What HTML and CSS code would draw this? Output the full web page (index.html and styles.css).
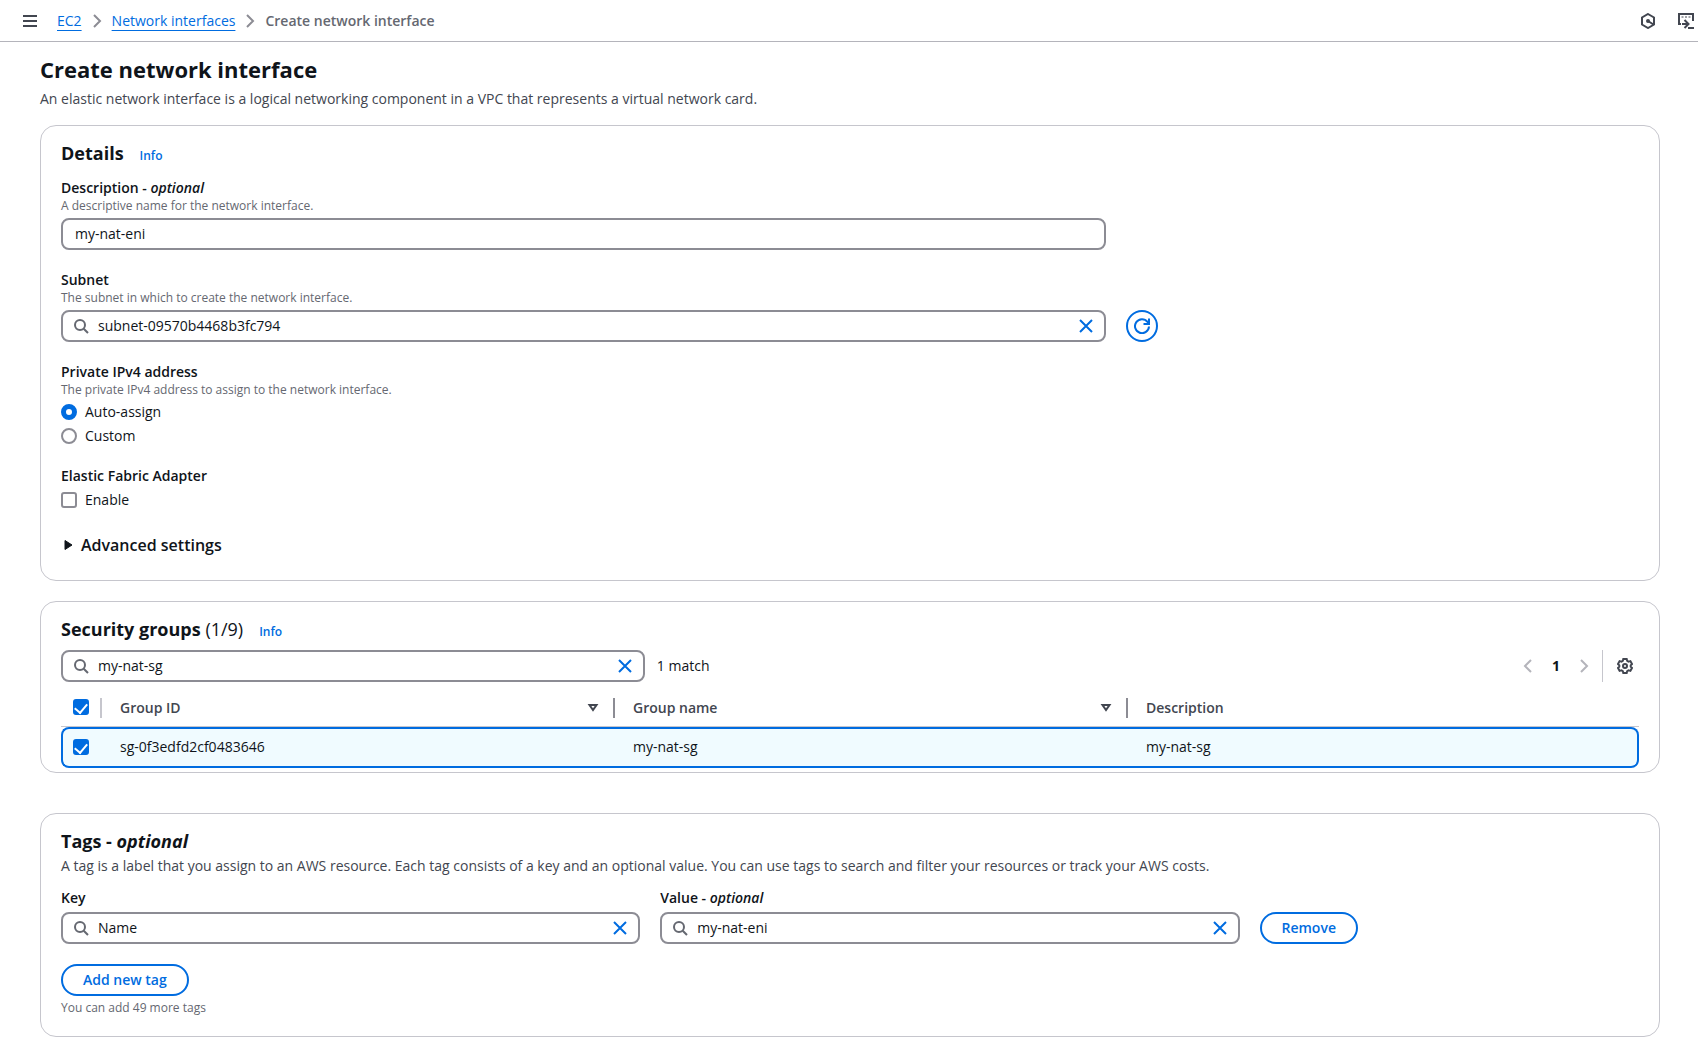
FILE: index.html
```html
<!DOCTYPE html>
<html lang="en">
<head>
<meta charset="utf-8">
<meta name="viewport" content="width=device-width, initial-scale=1">
<title>Create network interface | EC2</title>
<link rel="stylesheet" href="styles.css">
</head>
<body>
<svg class="sprite" aria-hidden="true">
  <symbol id="search" viewBox="0 0 16 16"><circle cx="7" cy="7" r="5"/><path d="m10.700 10.700 4.300 4.300"/></symbol>
  <symbol id="close" viewBox="0 0 16 16"><path d="m2 2 12 12M14 2 2 14"/></symbol>
  <symbol id="next" viewBox="0 0 16 16"><path d="m5 2 6 6-6 6"/></symbol>
  <symbol id="previous" viewBox="0 0 16 16"><path d="M11 2 5 8l6 6"/></symbol>
  <symbol id="sort" viewBox="0 0 16 16"><path d="M4.500 5h7L8 10z"/></symbol>
</svg>

<header class="topbar">
  <button class="icon-button" type="button" aria-label="Open navigation">
    <svg class="icon" viewBox="0 0 16 16"><path d="M1 3h14M1 8h14M1 13h14"/></svg>
  </button>
  <nav class="breadcrumbs" aria-label="Breadcrumbs">
    <a href="#">EC2</a>
    <svg class="icon"><use href="#next"/></svg>
    <a href="#">Network interfaces</a>
    <svg class="icon"><use href="#next"/></svg>
    <span class="current" aria-current="page">Create network interface</span>
  </nav>
  <div class="tools">
    <button class="icon-button" type="button" aria-label="Assistant">
      <svg class="icon" viewBox="0 0 16 16"><path d="m8 1 6 3.500v7L8 15l-6-3.500v-7zM8 8l5.500 3.500"/><circle class="solid" cx="8" cy="8" r="1"/></svg>
    </button>
    <button class="icon-button" type="button" aria-label="CloudShell">
      <svg class="icon" viewBox="0 0 16 16"><path d="M3 11H1V1h14v7M10 15h6M4 11h6M6.500 7l4 4-4 4"/><path class="fine" d="M3.500 4h2M7 4h2M10.500 4h2"/></svg>
    </button>
  </div>
</header>

<main class="page">
  <div class="page-header">
    <h1>Create network interface</h1>
    <p>An elastic network interface is a logical networking component in a VPC that represents a virtual network card.</p>
  </div>

  <section class="card details">
    <div class="card-title"><h2>Details</h2><a class="info" href="#">Info</a></div>
    <div class="fields">
      <div class="field">
        <label for="description">Description - <em>optional</em></label>
        <p class="hint">A descriptive name for the network interface.</p>
        <div class="grid-thirds"><div class="textbox wide"><input id="description" type="text" value="my-nat-eni"></div></div>
      </div>
      <div class="field">
        <label for="subnet">Subnet</label>
        <p class="hint">The subnet in which to create the network interface.</p>
        <div class="grid-thirds">
          <div class="textbox wide">
            <svg class="icon"><use href="#search"/></svg>
            <input id="subnet" type="text" value="subnet-09570b4468b3fc794">
            <button class="icon-button clear" type="button" aria-label="Clear subnet"><svg class="icon"><use href="#close"/></svg></button>
          </div>
          <button class="refresh" type="button" aria-label="Refresh subnets">
            <svg class="icon" viewBox="0 0 16 16"><path d="M15 8.500A7 7 0 1 1 13.500 3.800L15 5.500M15 .5V6h-5.500"/></svg>
          </button>
        </div>
      </div>
      <fieldset class="field">
        <legend>Private IPv4 address</legend>
        <p class="hint">The private IPv4 address to assign to the network interface.</p>
        <label class="choice"><input type="radio" name="ipv4" checked>Auto-assign</label>
        <label class="choice"><input type="radio" name="ipv4">Custom</label>
      </fieldset>
      <fieldset class="field">
        <legend>Elastic Fabric Adapter</legend>
        <label class="choice"><input type="checkbox">Enable</label>
      </fieldset>
    </div>
    <button class="expander" type="button" aria-expanded="false">
      <svg class="icon" viewBox="0 0 16 16"><path class="solid" d="M4 3.500v9L11 8z"/></svg>Advanced settings
    </button>
  </section>

  <section class="card groups">
    <div class="card-title"><h2>Security groups <span class="count">(1/9)</span></h2><a class="info" href="#">Info</a></div>
    <div class="toolbar">
      <div class="textbox filter">
        <svg class="icon"><use href="#search"/></svg>
        <input type="text" value="my-nat-sg" aria-label="Filter security groups">
        <button class="icon-button clear" type="button" aria-label="Clear filter"><svg class="icon"><use href="#close"/></svg></button>
      </div>
      <span>1 match</span>
      <div class="actions">
        <div class="pager">
          <button class="icon-button" type="button" aria-label="Previous page" disabled><svg class="icon"><use href="#previous"/></svg></button>
          <button class="page-number" type="button" aria-current="page">1</button>
          <button class="icon-button" type="button" aria-label="Next page" disabled><svg class="icon"><use href="#next"/></svg></button>
        </div>
        <div class="preferences">
          <button class="icon-button" type="button" aria-label="Preferences">
            <svg class="icon" viewBox="0 0 16 16"><path d="M6.300 1h3.400l.5 1.900 1.300.7 1.900-.5 1.600 2.900-1.300 1.300v1.400l1.300 1.300-1.600 2.900-1.900-.5-1.300.7-.5 1.900H6.300l-.5-1.900-1.300-.7-1.900.5L1 10l1.300-1.300V7.300L1 6l1.600-2.900 1.900.5 1.300-.7z"/><circle cx="8" cy="8" r="2"/></svg>
          </button>
        </div>
      </div>
    </div>
    <table>
      <colgroup><col class="select-column"><col><col><col></colgroup>
      <thead>
        <tr>
          <th scope="col"><input type="checkbox" aria-label="Select all groups" checked></th>
          <th scope="col"><div class="heading">Group ID<button class="icon-button" type="button" aria-label="Sort by group ID"><svg class="icon"><use href="#sort"/></svg></button></div></th>
          <th scope="col"><div class="heading">Group name<button class="icon-button" type="button" aria-label="Sort by group name"><svg class="icon"><use href="#sort"/></svg></button></div></th>
          <th scope="col"><div class="heading">Description</div></th>
        </tr>
      </thead>
      <tbody>
        <tr>
          <td><input type="checkbox" aria-label="Select my-nat-sg" checked></td>
          <td>sg-0f3edfd2cf0483646</td>
          <td>my-nat-sg</td>
          <td>my-nat-sg</td>
        </tr>
      </tbody>
    </table>
  </section>

  <section class="card tags">
    <div class="card-title"><h2>Tags - <em>optional</em></h2></div>
    <p class="summary">A tag is a label that you assign to an AWS resource. Each tag consists of a key and an optional value. You can use tags to search and filter your resources or track your AWS costs.</p>
    <div class="tag-row">
      <div class="field">
        <label for="key">Key</label>
        <div class="textbox">
          <svg class="icon"><use href="#search"/></svg>
          <input id="key" type="text" value="Name">
          <button class="icon-button clear" type="button" aria-label="Clear key"><svg class="icon"><use href="#close"/></svg></button>
        </div>
      </div>
      <div class="field">
        <label for="value">Value - <em>optional</em></label>
        <div class="textbox">
          <svg class="icon"><use href="#search"/></svg>
          <input id="value" type="text" value="my-nat-eni">
          <button class="icon-button clear" type="button" aria-label="Clear value"><svg class="icon"><use href="#close"/></svg></button>
        </div>
      </div>
      <button class="button" type="button">Remove</button>
    </div>
    <button class="button" type="button">Add new tag</button>
    <p class="hint">You can add 49 more tags</p>
  </section>
</main>
</body>
</html>
```
FILE: styles.css
```css
:root {
  --blue: #006ce0;
  --text: #0f141a;
  --muted: #424650;
  --hint: #656871;
  --control: #8c8c94;
  --line: #c6c6cd;
  --strong: 600;
}

* { box-sizing: border-box; }

body {
  margin: 0;
  background: #fff;
  color: var(--text);
  font: 14px/20px "Open Sans", "Noto Sans", sans-serif;
}

h1, h2, p { margin: 0; }
h1 { font-size: 22px; line-height: 30px; font-weight: 700; }
h2 { font-size: 18px; line-height: 24px; font-weight: 700; }
a { color: var(--blue); }

button, input { font: inherit; color: inherit; }
button { padding: 0; border: 0; background: none; cursor: pointer; }

.sprite { display: none; }

.icon {
  display: block;
  flex: none;
  width: 16px;
  height: 16px;
  fill: none;
  stroke: currentColor;
  stroke-width: 2;
}
.icon .solid { fill: currentColor; }
.icon .fine { stroke-width: 1; }
.icon-button { flex: none; color: var(--muted); }
.icon-button:disabled { color: #b4b4bb; }

.topbar {
  display: flex;
  align-items: center;
  gap: 19px;
  min-height: 42px;
  padding: 0 4px 0 22px;
  border-bottom: 1px solid #b4b4bb;
}
.breadcrumbs { display: flex; align-items: center; gap: 7px; color: var(--control); }
.breadcrumbs a { text-underline-offset: 4px; }
.current { color: var(--hint); font-weight: var(--strong); }
.tools { display: flex; gap: 22px; margin-left: auto; }

.page { padding: 12px 38px 15px 40px; }
.page-header { display: grid; gap: 5px; margin-bottom: 16px; color: var(--muted); }
.page-header h1 { color: var(--text); }

.card { border: 1px solid var(--line); border-radius: 16px; padding: 15px 20px 20px; }
.card-title { display: flex; align-items: baseline; gap: 16px; }
.info { font-size: 12px; line-height: 16px; font-weight: var(--strong); text-decoration: none; }
.count { font-weight: 400; }

.details { padding-bottom: 25px; }
.fields { display: grid; gap: 20px; margin-top: 13px; }
.field { display: flex; flex-direction: column; min-width: 0; margin: 0; padding: 0; border: 0; }
.field > label:not(.choice), legend { padding: 0; font-weight: var(--strong); }
.hint { color: var(--hint); font-size: 12px; line-height: 16px; }
.grid-thirds { display: grid; grid-template-columns: repeat(3, 1fr); gap: 20px; margin-top: 4px; }
.wide { grid-column: span 2; }

.textbox {
  display: flex;
  align-items: center;
  gap: 9px;
  height: 32px;
  padding: 0 10px;
  border: 2px solid var(--control);
  border-radius: 8px;
  color: var(--hint);
}
.textbox input { flex: 1; min-width: 0; padding: 0; border: 0; outline: 0; background: none; color: var(--text); }
.textbox input:only-child { padding-left: 2px; }
.clear { color: var(--blue); }

.refresh {
  display: grid;
  place-items: center;
  width: 32px;
  height: 32px;
  border: 2px solid var(--blue);
  border-radius: 50%;
  color: var(--blue);
}

.choice { display: flex; align-items: center; gap: 8px; margin-top: 4px; }

input[type="checkbox"], input[type="radio"] {
  appearance: none;
  display: block;
  flex: none;
  width: 16px;
  height: 16px;
  margin: 0;
  border: 2px solid var(--control);
  border-radius: 3px;
}
input[type="radio"] { border-radius: 50%; }
input[type="radio"]:checked { border: 5px solid var(--blue); }
input[type="checkbox"]:checked {
  display: grid;
  place-items: center;
  border-color: var(--blue);
  background: var(--blue);
}
input[type="checkbox"]:checked::before {
  content: "";
  width: 6px;
  height: 10px;
  margin-bottom: 2px;
  border: solid #fff;
  border-width: 0 2px 2px 0;
  transform: rotate(40deg);
}

.expander { display: flex; align-items: center; gap: 4px; margin-top: 25px; font-size: 16px; font-weight: var(--strong); }
.expander .icon { stroke-width: 1; }

.groups { margin-top: 20px; padding-bottom: 4px; }
.toolbar { display: flex; align-items: center; gap: 12px; margin-top: 9px; }
.filter { width: 37%; }
.actions { display: flex; align-items: center; gap: 10px; margin-left: auto; }
.pager { display: flex; align-items: center; gap: 16px; }
.page-number { font-weight: 700; }
.preferences { display: flex; align-items: center; height: 32px; padding: 0 6px 0 14px; border-left: 1px solid var(--line); }

table { width: 100%; table-layout: fixed; border-spacing: 0; text-align: left; }
.select-column { width: 39px; }
th { padding: 16px 0 8px; border-bottom: 1px solid var(--line); color: var(--muted); font-weight: var(--strong); }
th:first-child { padding: 15px 0 9px 12px; }
.heading {
  display: flex;
  align-items: center;
  justify-content: space-between;
  padding: 0 12px 0 18px;
  border-left: 2px solid var(--control);
}
th:nth-child(2) .heading { border-color: var(--line); }
td {
  height: 41px;
  padding: 0 0 1px 20px;
  border: solid var(--blue);
  border-width: 2px 0;
  background: #f0fbff;
}
td:first-child { padding-left: 10px; border-left-width: 2px; border-radius: 8px 0 0 8px; }
td:last-child { border-right-width: 2px; border-radius: 0 8px 8px 0; }

.tags { margin-top: 40px; }
.summary { margin-top: 3px; color: var(--muted); }
.tag-row { display: grid; grid-template-columns: repeat(8, 1fr); align-items: end; gap: 20px; margin: 12px 0 20px; }
.tag-row .field { grid-column: span 3; gap: 4px; }
.button {
  justify-self: start;
  height: 32px;
  padding: 0 20px;
  border: 2px solid var(--blue);
  border-radius: 16px;
  color: var(--blue);
  font-weight: var(--strong);
}
.tags .hint { margin-top: 4px; }
```
